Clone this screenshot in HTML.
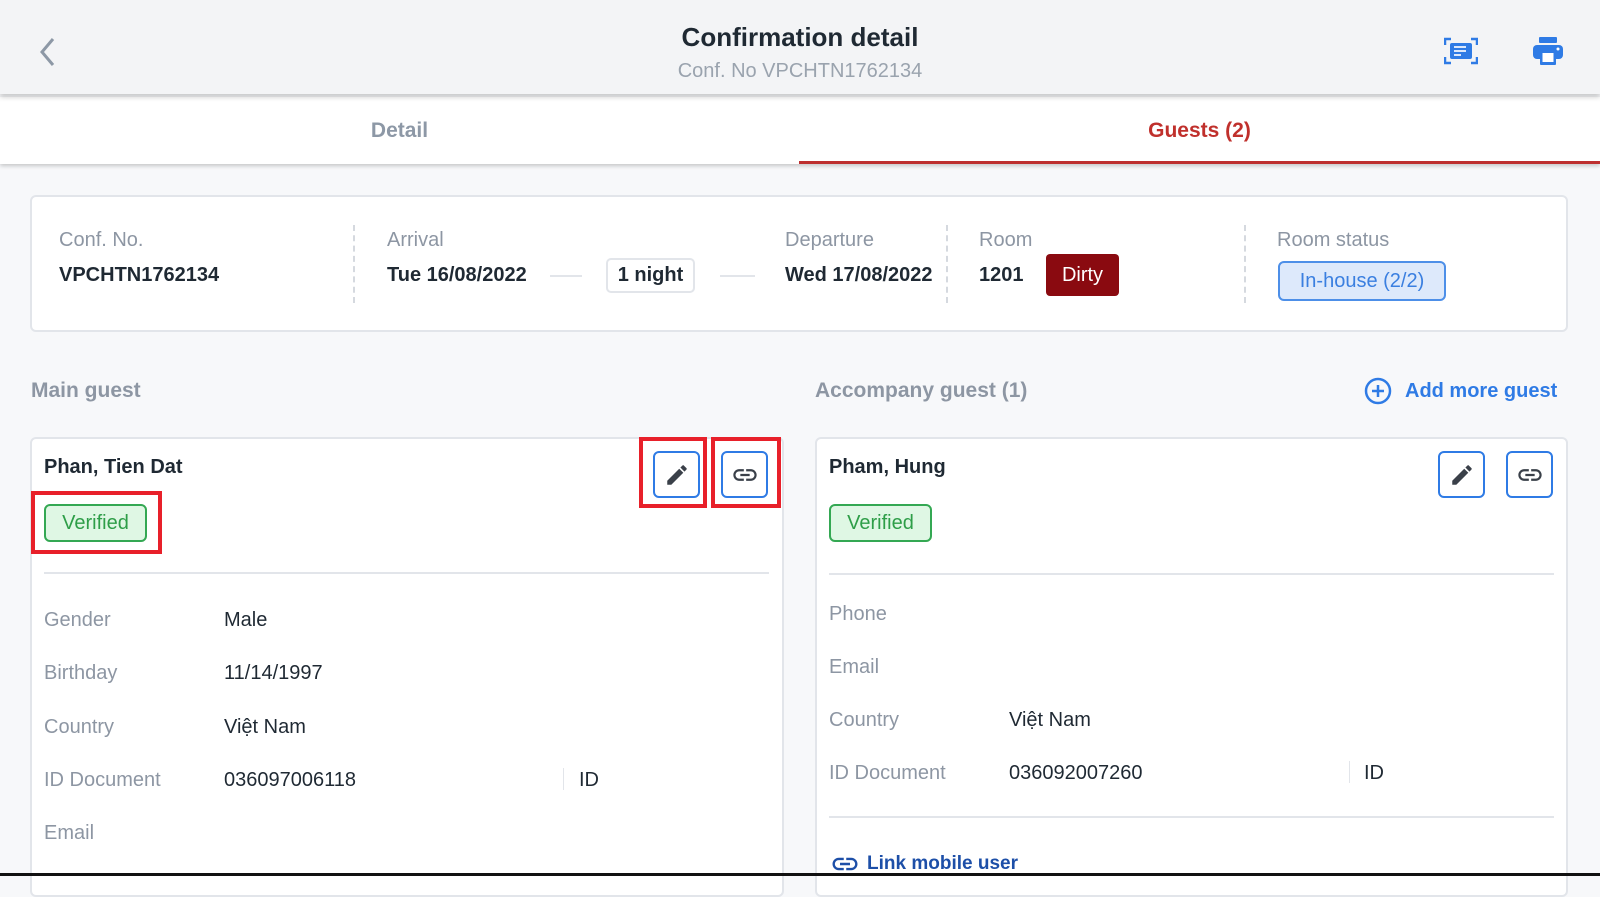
<!DOCTYPE html>
<html><head><meta charset="utf-8"><style>
*{margin:0;padding:0;box-sizing:border-box}
body{width:1600px;height:876px;overflow:hidden;background:#f7f8fa;font-family:"Liberation Sans",sans-serif;position:relative;color:#1f2933}
.a{position:absolute;white-space:nowrap}
.lbl{color:#8d96a3;font-size:20px}
.val{color:#1f2933;font-size:20px}
.card{position:absolute;background:#fff;border:2px solid #e2e5ea;border-radius:6px}
.btn{position:absolute;width:47px;height:47px;border:2px solid #2f7be5;border-radius:6px;background:#fff}
.red{position:absolute;border:4px solid #e8202a}
.ver{position:absolute;background:#dff7e4;border:2px solid #34a853;color:#2e9e48;border-radius:6px;font-size:20px;text-align:center;line-height:34px}
.hr{position:absolute;height:2px;background:#e2e5ea}
</style></head><body>
<div class="a" style="left:0;top:0;width:1600px;height:94px;background:#f3f4f6;box-shadow:0 3px 5px rgba(0,0,0,.2);z-index:2"></div>
<svg class="a" style="left:36px;top:36px;z-index:3" width="22" height="32"><path d="M17 3 L6 16 L17 29" stroke="#8d98a6" stroke-width="3" fill="none"/></svg>
<div class="a" style="left:0;width:1600px;text-align:center;top:22px;font-size:26px;font-weight:bold;color:#1f2933;z-index:3">Confirmation detail</div>
<div class="a" style="left:0;width:1600px;text-align:center;top:60px;font-size:20px;color:#9aa3ae;z-index:3">Conf. No VPCHTN1762134</div>
<svg class="a" style="left:1444px;top:37px;z-index:3" width="34" height="28" viewBox="0 0 34 28"><g fill="none" stroke="#2f7be5" stroke-width="2.5"><path d="M1 8V2h6M27 2h6v6M33 20v6h-6M7 26H1v-6"/></g><rect x="6" y="6" width="22" height="16" rx="2" fill="#2f7be5"/><path d="M10 10h12M10 14h12M10 18h7" stroke="#dce8fb" stroke-width="2"/></svg>
<svg class="a" style="left:1533px;top:37px;z-index:3" width="30" height="28" viewBox="0 0 30 28"><rect x="6" y="0" width="18" height="6" rx="1" fill="#2f7be5"/><rect x="0" y="8" width="30" height="14" rx="4" fill="#2f7be5"/><rect x="7" y="15" width="16" height="13" rx="1" fill="#2f7be5"/><rect x="9.5" y="16" width="11" height="9" fill="#fff"/><circle cx="25" cy="12" r="1.5" fill="#fff"/></svg>
<div class="a" style="left:0;top:97px;width:1600px;height:67px;background:#fff;box-shadow:0 2px 4px rgba(0,0,0,.2)"></div>
<div class="a" style="left:0;width:799px;text-align:center;top:119px;font-size:21px;color:#8d98a6;font-weight:bold">Detail</div>
<div class="a" style="left:799px;width:801px;text-align:center;top:119px;font-size:21px;color:#c0302c;font-weight:bold">Guests (2)</div>
<div class="a" style="left:799px;top:161px;width:801px;height:3px;background:#bd2f2f"></div>

<div class="card" style="left:30px;top:195px;width:1538px;height:137px"></div>
<div class="a lbl" style="left:59px;top:229px">Conf. No.</div>
<div class="a val" style="left:59px;top:264px;font-weight:bold">VPCHTN1762134</div>
<div class="a" style="left:353px;top:225px;height:78px;border-left:2px dashed #d5d9df"></div>
<div class="a lbl" style="left:387px;top:229px">Arrival</div>
<div class="a val" style="left:387px;top:264px;font-weight:bold">Tue 16/08/2022</div>
<div class="a" style="left:550px;top:275px;width:32px;height:2px;background:#e2e5ea"></div>
<div class="a" style="left:606px;top:258px;width:89px;height:35px;border:2px solid #e2e5ea;border-radius:5px;text-align:center;line-height:31px;font-size:20px;font-weight:bold">1 night</div>
<div class="a" style="left:720px;top:275px;width:35px;height:2px;background:#e2e5ea"></div>
<div class="a lbl" style="left:785px;top:229px">Departure</div>
<div class="a val" style="left:785px;top:264px;font-weight:bold">Wed 17/08/2022</div>
<div class="a" style="left:946px;top:225px;height:78px;border-left:2px dashed #d5d9df"></div>
<div class="a lbl" style="left:979px;top:229px">Room</div>
<div class="a val" style="left:979px;top:264px;font-weight:bold">1201</div>
<div class="a" style="left:1046px;top:254px;width:73px;height:42px;background:#8a0a10;border-radius:4px;color:#fff;font-size:20px;text-align:center;line-height:42px">Dirty</div>
<div class="a" style="left:1244px;top:225px;height:78px;border-left:2px dashed #d5d9df"></div>
<div class="a lbl" style="left:1277px;top:229px">Room status</div>
<div class="a" style="left:1278px;top:261px;width:168px;height:40px;background:#dde9fb;border:2px solid #4d8fe8;border-radius:6px;color:#3a7fe0;font-size:20px;text-align:center;line-height:36px">In-house (2/2)</div>

<div class="a" style="left:31px;top:379px;font-size:21px;font-weight:bold;color:#8d96a3">Main guest</div>
<div class="a" style="left:815px;top:379px;font-size:21px;font-weight:bold;color:#8d96a3">Accompany guest (1)</div>
<svg class="a" style="left:1364px;top:377px" width="28" height="28"><circle cx="14" cy="14" r="12" fill="none" stroke="#2f7be5" stroke-width="2.5"/><path d="M14 8v12M8 14h12" stroke="#2f7be5" stroke-width="2.5"/></svg>
<div class="a" style="left:1405px;top:380px;font-size:20px;font-weight:bold;color:#2f7be5">Add more guest</div>

<div class="card" style="left:30px;top:437px;width:754px;height:460px"></div>
<div class="card" style="left:815px;top:437px;width:753px;height:460px"></div>

<div class="a" style="left:44px;top:456px;font-size:20px;font-weight:bold">Phan, Tien Dat</div>
<div class="red" style="left:639px;top:437px;width:68px;height:71px"></div>
<div class="red" style="left:711px;top:437px;width:70px;height:71px"></div>
<div class="red" style="left:31px;top:491px;width:131px;height:63px"></div>
<div class="btn" style="left:653px;top:451px"></div>
<div class="btn" style="left:721px;top:451px"></div>
<div class="ver" style="left:44px;top:504px;width:103px;height:38px">Verified</div>
<div class="hr" style="left:44px;top:572px;width:725px"></div>
<div class="a lbl" style="left:44px;top:609px">Gender</div><div class="a val" style="left:224px;top:609px">Male</div>
<div class="a lbl" style="left:44px;top:662px">Birthday</div><div class="a val" style="left:224px;top:662px">11/14/1997</div>
<div class="a lbl" style="left:44px;top:716px">Country</div><div class="a val" style="left:224px;top:716px">Việt Nam</div>
<div class="a lbl" style="left:44px;top:769px">ID Document</div><div class="a val" style="left:224px;top:769px">036097006118</div>
<div class="a" style="left:563px;top:768px;width:1px;height:22px;background:#e2e5ea"></div><div class="a val" style="left:579px;top:769px">ID</div>
<div class="a lbl" style="left:44px;top:822px">Email</div>

<div class="a" style="left:829px;top:456px;font-size:20px;font-weight:bold">Pham, Hung</div>
<div class="btn" style="left:1438px;top:451px"></div>
<div class="btn" style="left:1506px;top:451px"></div>
<div class="ver" style="left:829px;top:504px;width:103px;height:38px">Verified</div>
<div class="hr" style="left:829px;top:573px;width:725px"></div>
<div class="a lbl" style="left:829px;top:603px">Phone</div>
<div class="a lbl" style="left:829px;top:656px">Email</div>
<div class="a lbl" style="left:829px;top:709px">Country</div><div class="a val" style="left:1009px;top:709px">Việt Nam</div>
<div class="a lbl" style="left:829px;top:762px">ID Document</div><div class="a val" style="left:1009px;top:762px">036092007260</div>
<div class="a" style="left:1349px;top:761px;width:1px;height:22px;background:#e2e5ea"></div><div class="a val" style="left:1364px;top:762px">ID</div>
<div class="hr" style="left:829px;top:816px;width:725px"></div>
<svg class="a" style="left:830px;top:849px" width="30" height="30" viewBox="0 0 24 24"><path d="M3.9 12c0-1.71 1.39-3.1 3.1-3.1h4V7H7c-2.76 0-5 2.24-5 5s2.24 5 5 5h4v-1.9H7c-1.71 0-3.1-1.39-3.1-3.1zM8 13h8v-2H8v2zm9-6h-4v1.9h4c1.71 0 3.1 1.39 3.1 3.1s-1.39 3.1-3.1 3.1h-4V17h4c2.76 0 5-2.24 5-5s-2.24-5-5-5z" fill="#1d4fa8"/></svg>
<div class="a" style="left:867px;top:853px;font-size:19px;font-weight:bold;color:#1d4fa8">Link mobile user</div>

<svg class="a" style="left:664px;top:462px" width="26" height="26" viewBox="0 0 24 24"><path d="M3 17.25V21h3.75L17.81 9.94l-3.75-3.75L3 17.25zM20.71 7.04a1 1 0 000-1.41l-2.34-2.34a1 1 0 00-1.41 0l-1.83 1.83 3.75 3.75 1.83-1.83z" fill="#3a4049"/></svg>
<svg class="a" style="left:1449px;top:462px" width="26" height="26" viewBox="0 0 24 24"><path d="M3 17.25V21h3.75L17.81 9.94l-3.75-3.75L3 17.25zM20.71 7.04a1 1 0 000-1.41l-2.34-2.34a1 1 0 00-1.41 0l-1.83 1.83 3.75 3.75 1.83-1.83z" fill="#3a4049"/></svg>
<svg class="a" style="left:731px;top:461px" width="28" height="28" viewBox="0 0 24 24"><path d="M3.9 12c0-1.71 1.39-3.1 3.1-3.1h4V7H7c-2.76 0-5 2.24-5 5s2.24 5 5 5h4v-1.9H7c-1.71 0-3.1-1.39-3.1-3.1zM8 13h8v-2H8v2zm9-6h-4v1.9h4c1.71 0 3.1 1.39 3.1 3.1s-1.39 3.1-3.1 3.1h-4V17h4c2.76 0 5-2.24 5-5s-2.24-5-5-5z" fill="#3a4049"/></svg>
<svg class="a" style="left:1516px;top:461px" width="28" height="28" viewBox="0 0 24 24"><path d="M3.9 12c0-1.71 1.39-3.1 3.1-3.1h4V7H7c-2.76 0-5 2.24-5 5s2.24 5 5 5h4v-1.9H7c-1.71 0-3.1-1.39-3.1-3.1zM8 13h8v-2H8v2zm9-6h-4v1.9h4c1.71 0 3.1 1.39 3.1 3.1s-1.39 3.1-3.1 3.1h-4V17h4c2.76 0 5-2.24 5-5s-2.24-5-5-5z" fill="#3a4049"/></svg>
<div class="a" style="left:0;top:873px;width:1600px;height:3px;background:#111"></div>
</body></html>
